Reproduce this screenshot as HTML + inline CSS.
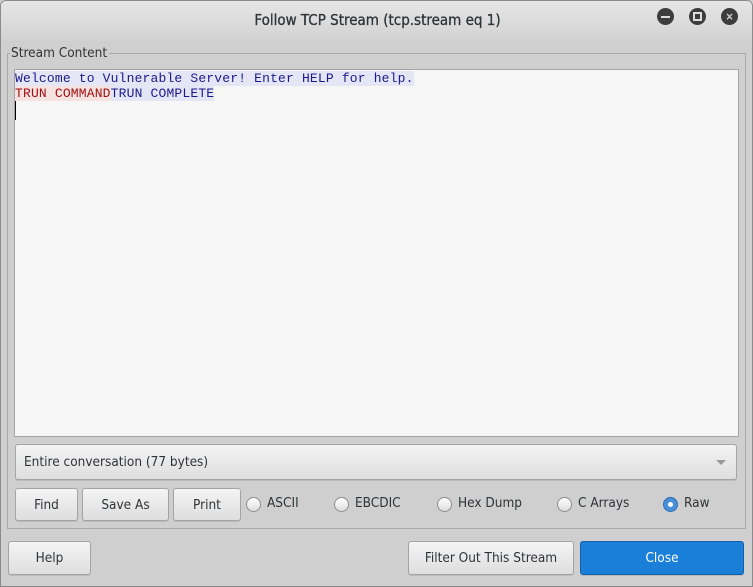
<!DOCTYPE html>
<html><head><style>
*{box-sizing:border-box;margin:0;padding:0}
body{width:753px;height:587px;overflow:hidden;background:#cfcfcf;font-family:"DejaVu Sans Condensed","Liberation Sans",sans-serif;font-size:13.5px;color:#2e3436;position:relative}
.win{position:absolute;left:0;top:0;width:753px;height:587px;border:1px solid #8a8a8a;border-radius:6px 6px 0 0;background:#cfcfcf;overflow:hidden}
.title{position:absolute;left:0;top:0;width:753px;height:40px;background:linear-gradient(#e6e6e6,#d2d2d2);text-align:center;line-height:38px;font-size:15px;color:#2e3436;-webkit-text-stroke:0.3px #2e3436}
.tb{position:absolute;top:7px;width:17px;height:17px;border-radius:50%;background:#3d3d3d}
.grp{position:absolute;left:6px;top:52px;width:739px;height:476px;border:1px solid #a9a9a9}
.lbl{position:absolute;left:9px;top:44px;background:#cfcfcf;padding:0 2px 0 1px;color:#333;font-size:13.5px}
.ta{position:absolute;left:13px;top:68px;width:725px;height:368px;background:#f6f6f6;border:1px solid #a5a5a5;font-family:"Liberation Mono",monospace;font-size:13px;letter-spacing:0.17px;line-height:15px;padding-top:1px}
.red{background:#f7e2e2;color:#a01010}
.blu{background:#e5e6f5;color:#1a1a8c}
.btn{position:absolute;border:1px solid #a3a3a3;border-radius:3px;background:linear-gradient(#f4f4f4,#dedede);text-align:center;color:#2e3436;box-shadow:0 1px 0 #bbb}
.rad{position:absolute;top:496px;width:15px;height:15px;border-radius:50%;border:1px solid #8d8d8d;background:linear-gradient(#fff,#ddd)}
.rt{position:absolute;top:494px}
</style></head><body><div class="win">
<div class="title">Follow TCP Stream (tcp.stream eq 1)</div>
<div class="tb" style="left:656px"><div style="position:absolute;left:4px;top:8px;width:9px;height:2px;background:#ddd"></div></div>
<div class="tb" style="left:688px"><div style="position:absolute;left:4px;top:4px;width:9px;height:9px;border:2px solid #ddd"></div></div>
<div class="tb" style="left:720px;color:#ddd;font-size:11px;text-align:center;line-height:17px;font-weight:bold">×</div>
<div class="grp"></div>
<div class="lbl">Stream Content</div>
<div class="ta"><span class="blu">Welcome to Vulnerable Server! Enter HELP for help.</span><br><span class="red">TRUN COMMAND</span><span class="blu">TRUN COMPLETE</span><br><span style="display:inline-block;width:1px;height:19px;background:#000"></span></div>
<div class="btn" style="left:14px;top:443px;width:722px;height:36px;text-align:left;padding-left:8px;line-height:35px">Entire conversation (77 bytes)<div style="position:absolute;right:10px;top:15px;border-left:5px solid transparent;border-right:5px solid transparent;border-top:5px solid #999"></div></div>
<div class="btn" style="left:14px;top:487px;width:63px;height:33px;line-height:32px">Find</div>
<div class="btn" style="left:81px;top:487px;width:87px;height:33px;line-height:32px">Save As</div>
<div class="btn" style="left:172px;top:487px;width:68px;height:33px;line-height:32px">Print</div>
<div class="rad" style="left:245px"></div><div class="rt" style="left:266px">ASCII</div>
<div class="rad" style="left:333px"></div><div class="rt" style="left:354px">EBCDIC</div>
<div class="rad" style="left:436px"></div><div class="rt" style="left:457px">Hex Dump</div>
<div class="rad" style="left:556px"></div><div class="rt" style="left:577px">C Arrays</div>
<div class="rad" style="left:662px;background:#4a90d9;border-color:#2a6cb5"><div style="position:absolute;left:4px;top:4px;width:5px;height:5px;border-radius:50%;background:#fff"></div></div><div class="rt" style="left:683px">Raw</div>
<div class="btn" style="left:7px;top:540px;width:83px;height:34px;line-height:33px">Help</div>
<div class="btn" style="left:407px;top:540px;width:166px;height:34px;line-height:33px">Filter Out This Stream</div>
<div class="btn" style="left:579px;top:540px;width:164px;height:34px;line-height:33px;background:#1a7fd8;border-color:#1460a8;color:#fff">Close</div>
</div></body></html>
